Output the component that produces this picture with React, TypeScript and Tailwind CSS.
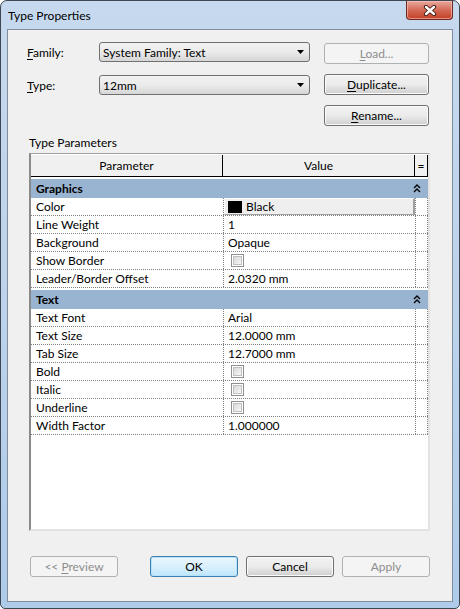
import React from "react";

const FONT = { fontFamily: 'Lato, "Noto Sans", "Liberation Sans", sans-serif' };

function U({ children }: { children: React.ReactNode }) {
  return <span className="underline underline-offset-[2px] decoration-[1px]">{children}</span>;
}

function Combo({ text }: { text: string }) {
  return (
    <div className="w-[211px] h-[20px] rounded-[3px] border border-[#707070] bg-gradient-to-b from-[#f2f2f2] via-[#ebebeb] to-[#d6d6d6] flex items-center justify-between pl-[3px] pr-[4px]">
      <span className="text-[12px] leading-[15px] text-black">{text}</span>
      <svg width="8" height="5" viewBox="0 0 8 5">
        <path d="M0 0 H7 L3.5 4 Z" fill="#000" />
      </svg>
    </div>
  );
}

function Btn({
  children,
  w = "w-[105px]",
  disabled = false,
  primary = false,
}: {
  children: React.ReactNode;
  w?: string;
  disabled?: boolean;
  primary?: boolean;
}) {
  const cls = disabled
    ? "border-[#adb2b5] bg-[#f4f4f4] text-[#8d8d8d]"
    : primary
    ? "border-[#3c7fb1] bg-gradient-to-b from-[#eaf6fd] via-[#d9f0fc] to-[#bee6fd] text-black shadow-[inset_0_0_0_1px_#b7e2f8]"
    : "border-[#707070] bg-gradient-to-b from-[#f2f2f2] via-[#ebebeb] to-[#cfcfcf] text-black shadow-[inset_0_0_0_1px_#fbfbfb]";
  return (
    <div className={`${w} h-[21px] rounded-[3px] border flex items-center justify-center text-[12px] leading-[15px] ${cls}`}>
      {children}
    </div>
  );
}

function Chevrons() {
  return (
    <svg width="8" height="9" viewBox="0 0 8 9">
      <path d="M1 4 L4 1 L7 4" stroke="#000" strokeWidth="1.4" fill="none" />
      <path d="M1 8 L4 5 L7 8" stroke="#000" strokeWidth="1.4" fill="none" />
    </svg>
  );
}

function Group({ label }: { label: string }) {
  return (
    <div className="mt-[2px] h-[19px] w-[397px] bg-[#99b4d1] flex items-center justify-between pl-[5px] pr-[7px]">
      <span className="text-[12px] leading-[15px] font-bold text-black">{label}</span>
      <Chevrons />
    </div>
  );
}

function Check() {
  return (
    <div className="w-[13px] h-[13px] border border-[#8f8f8f] bg-white p-[1px] ml-[3px]">
      <div className="w-full h-full border border-[#c0c0c0] bg-gradient-to-br from-[#d9d9d9] to-[#f7f7f7]" />
    </div>
  );
}

type Row = { p: string; v?: string; kind?: "text" | "check" | "color" };

function DataRow({ row }: { row: Row }) {
  return (
    <div className="flex h-[18px] w-[397px] border-b border-dotted border-[#808080]">
      <div className="w-[192px] pl-[5px] flex items-center text-[12px] leading-[15px] text-black">{row.p}</div>
      {row.kind === "color" ? (
        <div className="w-[192px] border-l border-dotted border-[#808080] flex">
          <div className="flex-1 flex items-center bg-[#efefef] border-t border-l border-[#fdfdfd] border-r-2 border-b border-r-[#a0a0a0] border-b-[#a0a0a0]">
            <div className="w-[14px] h-[12px] bg-black ml-[3px]" />
            <span className="ml-[4px] text-[12px] leading-[15px] text-black">{row.v}</span>
          </div>
        </div>
      ) : (
        <div className="w-[192px] border-l border-dotted border-[#808080] flex items-center pl-[4px] text-[12px] leading-[15px] text-black">
          {row.kind === "check" ? <Check /> : row.v}
        </div>
      )}
      <div className="w-[13px] border-l border-r border-dotted border-[#808080]" />
    </div>
  );
}

const graphics: Row[] = [
  { p: "Color", v: "Black", kind: "color" },
  { p: "Line Weight", v: "1" },
  { p: "Background", v: "Opaque" },
  { p: "Show Border", kind: "check" },
  { p: "Leader/Border Offset", v: "2.0320 mm" },
];

const textRows: Row[] = [
  { p: "Text Font", v: "Arial" },
  { p: "Text Size", v: "12.0000 mm" },
  { p: "Tab Size", v: "12.7000 mm" },
  { p: "Bold", kind: "check" },
  { p: "Italic", kind: "check" },
  { p: "Underline", kind: "check" },
  { p: "Width Factor", v: "1.000000" },
];

export default function App() {
  return (
    <div style={FONT} className="w-[460px] h-[609px] bg-white">
      <div className="w-[460px] h-[609px] flex flex-col border border-[#3d4652] rounded-t-[7px] rounded-b-[5px] bg-gradient-to-b from-[#c6d9ee] via-[#bcd3eb] to-[#aecbea] overflow-hidden">
        {/* title bar */}
        <div className="h-[28px] flex items-start justify-between">
          <span className="pl-[7px] pt-[7px] text-[12px] leading-[15px] text-black">Type Properties</span>
          <div className="mr-[6px] w-[47px] h-[19px] rounded-b-[4px] border border-t-0 border-[#6b2a20] bg-gradient-to-b from-[#e6aaa0] via-[#d46a56] to-[#c33d24] flex items-center justify-center shadow-[inset_0_0_0_1px_rgba(255,200,190,0.6)]">
            <svg width="14" height="11" viewBox="0 0 14 11">
              <path d="M3 2 L11 9 M11 2 L3 9" stroke="#3a1610" strokeWidth="4.2" strokeLinecap="round" fill="none" />
              <path d="M3 2 L11 9 M11 2 L3 9" stroke="#ffffff" strokeWidth="2.4" strokeLinecap="round" fill="none" />
            </svg>
          </div>
        </div>

        {/* client area */}
        <div className="ml-[6px] mr-[6px] h-[573px] border border-[#7f8d9c] bg-[#f0f0f0] flex flex-col">
          {/* Family row */}
          <div className="mt-[12px] flex items-start">
            <div className="ml-[19px] w-[72px] h-[20px] flex items-center text-[12px] leading-[15px] text-black">
              <span>
                <U>F</U>amily:
              </span>
            </div>
            <Combo text="System Family: Text" />
            <div className="ml-[14px] mt-[1px]">
              <Btn disabled>
                <span>
                  <U>L</U>oad...
                </span>
              </Btn>
            </div>
          </div>

          {/* Type row */}
          <div className="mt-[10px] flex items-start">
            <div className="ml-[19px] mt-[1px] w-[72px] h-[20px] flex items-center text-[12px] leading-[15px] text-black">
              <span>
                <U>T</U>ype:
              </span>
            </div>
            <div className="mt-[1px]">
              <Combo text="12mm" />
            </div>
            <div className="ml-[14px]">
              <Btn>
                <span>
                  <U>D</U>uplicate...
                </span>
              </Btn>
            </div>
          </div>

          {/* Rename */}
          <div className="mt-[10px] ml-[316px]">
            <Btn>
              <span>
                <U>R</U>ename...
              </span>
            </Btn>
          </div>

          <div className="mt-[9px] ml-[21px] text-[12px] leading-[15px] text-black">Type Parameters</div>

          {/* table */}
          <div className="mt-[3px] ml-[21px] w-[401px] h-[378px] border-t border-l-2 border-r-2 border-b-2 border-t-[#a0a0a0] border-l-[#8a8a8a] border-r-[#e3e3e3] border-b-[#e3e3e3] bg-white flex flex-col">
            <div className="flex h-[23px] w-[397px] bg-[#f0f0f0] border-b border-black border-t border-t-white">
              <div className="w-[192px] flex items-center justify-center text-[12px] leading-[15px] text-black border-r border-black">
                Parameter
              </div>
              <div className="w-[192px] flex items-center justify-center text-[12px] leading-[15px] text-black border-r border-black">
                Value
              </div>
              <div className="w-[13px] flex items-center justify-center text-[12px] leading-[15px] text-black border-r border-black">
                =
              </div>
            </div>
            <Group label="Graphics" />
            {graphics.map((r) => (
              <DataRow key={r.p} row={r} />
            ))}
            <Group label="Text" />
            {textRows.map((r) => (
              <DataRow key={r.p} row={r} />
            ))}
          </div>

          {/* bottom buttons */}
          <div className="mt-[25px] ml-[22px] flex items-start">
            <Btn w="w-[88px]" disabled>
              <span>
                &lt;&lt; <U>P</U>review
              </span>
            </Btn>
            <div className="ml-[32px]">
              <Btn w="w-[88px]" primary>
                OK
              </Btn>
            </div>
            <div className="ml-[8px]">
              <Btn w="w-[88px]">Cancel</Btn>
            </div>
            <div className="ml-[8px]">
              <Btn w="w-[88px]" disabled>
                Apply
              </Btn>
            </div>
          </div>
        </div>
      </div>
    </div>
  );
}
